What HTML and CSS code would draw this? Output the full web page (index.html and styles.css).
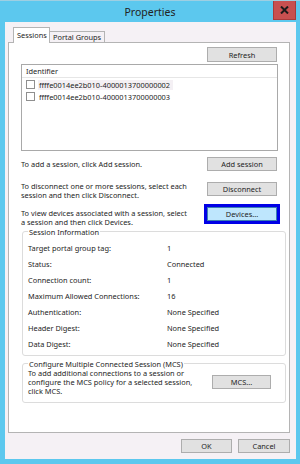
FILE: index.html
```html
<!DOCTYPE html>
<html lang="en">
  <head>
    <meta charset="UTF-8" />
    <title>Properties</title>
    <link rel="stylesheet" href="styles.css">
  </head>
  <body>
    <div class="window">
      <div class="titlebar">
        <span></span>
        <span class="title">Properties</span>
        <span class="close">
          <svg width="9" height="8" viewBox="0 0 9 8">
            <path d="M1 0.5 L8 7.5 M8 0.5 L1 7.5" stroke="#1a1a1a" stroke-width="2" />
          </svg>
        </span>
      </div>

      <div class="client">
        <div class="tabs">
          <div class="tab active">Sessions</div>
          <div class="tab">Portal Groups</div>
        </div>

        <div class="panel">
          <div class="refresh-row">
            <button>Refresh</button>
          </div>

          <div class="list">
            <div class="list-head">Identifier</div>
            <div class="list-item selected">
              <span class="check"></span>
              <span class="ident">ffffe0014ee2b010-4000013700000002</span>
            </div>
            <div class="list-item">
              <span class="check"></span>
              <span class="ident">ffffe0014ee2b010-4000013700000003</span>
            </div>
          </div>

          <div class="action add">
            <p>To add a session, click Add session.</p>
            <button>Add session</button>
          </div>

          <div class="action disconnect">
            <p>To disconnect one or more sessions, select each<br />session and then click Disconnect.</p>
            <button>Disconnect</button>
          </div>

          <div class="action devices">
            <p>To view devices associated with a session, select<br />a session and then click Devices.</p>
            <button class="focused">Devices...</button>
          </div>

          <fieldset class="group info">
            <legend>Session Information</legend>
            <dl>
              <dt>Target portal group tag:</dt><dd>1</dd>
              <dt>Status:</dt><dd>Connected</dd>
              <dt>Connection count:</dt><dd>1</dd>
              <dt>Maximum Allowed Connections:</dt><dd>16</dd>
              <dt>Authentication:</dt><dd>None Specified</dd>
              <dt>Header Digest:</dt><dd>None Specified</dd>
              <dt>Data Digest:</dt><dd>None Specified</dd>
            </dl>
          </fieldset>

          <fieldset class="group mcs">
            <legend>Configure Multiple Connected Session (MCS)</legend>
            <div class="mcs-body">
              <p>To add additional connections to a session or<br />configure the MCS policy for a selected session,<br />click MCS.</p>
              <button>MCS...</button>
            </div>
          </fieldset>
        </div>
        <!-- .panel -->

        <div class="footer">
          <button>OK</button>
          <button>Cancel</button>
        </div>
      </div>
      <!-- .client -->
    </div>
    <!-- .window -->
  </body>
</html>
```

FILE: styles.css
```css
*,
*::before,
*::after {
  box-sizing: border-box;
  padding: 0;
  margin: 0;
}

body {
  width: 300px;
  height: 464px;
  overflow: hidden;
  font-family: 'Noto Sans', 'DejaVu Sans', sans-serif;
  font-size: 7.4px;
  color: #1e1e1e;
}

.window {
  height: 464px;
  display: flex;
  flex-direction: column;
  background-color: #5cc8ee;
  border-top: 1px solid #9ecfe2;
}

.titlebar {
  height: 21px;
  display: grid;
  grid-template-columns: 1fr auto 1fr;
  align-items: start;
}

.titlebar .title {
  padding-top: 4px;
  font-size: 10.5px;
  color: #222;
}

.titlebar .close {
  justify-self: end;
  width: 23px;
  height: 19px;
  margin-right: 4px;
  display: flex;
  align-items: center;
  justify-content: center;
  background-color: #c75050;
  border: 1px solid #a83b3b;
  border-top: none;
}

.client {
  flex: 1;
  margin: 0 4px 5px 5px;
  padding: 5px 6px 0 3px;
  display: flex;
  flex-direction: column;
  background-color: #f5f1f5;
}

.tabs {
  display: flex;
  align-items: flex-end;
  padding-left: 5px;
  margin-bottom: -1px;
}

.tab {
  height: 12px;
  padding: 0 3px;
  line-height: 11px;
  white-space: nowrap;
  border: 1px solid #b4b4b4;
  border-bottom: none;
  background-color: #f5f1f5;
}

.tab.active {
  position: relative;
  z-index: 1;
  width: 37px;
  height: 16px;
  padding-top: 2px;
  background-color: #fff;
}

.tab + .tab {
  border-left: none;
}

.panel {
  height: 391px;
  padding: 0 3px 0 12px;
  display: flex;
  flex-direction: column;
  background-color: #fff;
  border: 1px solid #b4b4b4;
}

button {
  height: 14px;
  font-family: inherit;
  font-size: inherit;
  color: #1e1e1e;
  background-color: #e1e1e1;
  border: 1px solid #adadad;
}

.refresh-row {
  display: flex;
  justify-content: flex-end;
  margin: 4px 9px 0 0;
}

.refresh-row button {
  width: 70px;
  height: 15px;
}

.list {
  height: 87px;
  margin: 2px 8px 0 0;
  border: 1px solid #a9a9a9;
}

.list-head {
  height: 13px;
  padding-left: 4px;
  line-height: 12px;
  border-bottom: 1px solid #e6e6e6;
}

.list-item {
  height: 12px;
  padding: 1px 0 0 4px;
  display: flex;
  align-items: center;
  gap: 3px;
}

.check {
  width: 9px;
  height: 9px;
  border: 1px solid #8f8f8f;
  background-color: #fff;
}

.ident {
  padding: 0 3px 0 1px;
  line-height: 10px;
}

.list-item.selected .ident {
  background-color: #f4f0f4;
}

.action {
  display: grid;
  grid-template-columns: 1fr 70px;
  margin-right: 9px;
  line-height: 9.5px;
}

.action p {
  padding-top: 0.5px;
}

.action.add {
  margin-top: 6px;
  align-items: center;
}

.action.disconnect {
  margin-top: 10px;
}

.action.disconnect button {
  margin-top: 1px;
}

.action.devices {
  margin-top: 6px;
}

.action.devices p {
  padding-top: 2px;
}

button.focused {
  background-color: #bee6fd;
  border-color: #3c7fb1;
  outline: 3px solid #0000e6;
}

.group {
  margin-left: 1px;
  padding: 0 5px;
  border: 1px solid #dcdcdc;
  border-radius: 3px;
}

.group legend {
  padding: 0 1px;
  line-height: 10px;
}

.info {
  margin-top: -1px;
  height: 129px;
}

.info dl {
  display: grid;
  grid-template-columns: 139px 1fr;
  grid-auto-rows: 16.1px;
  align-items: center;
  padding-top: 3px;
}

.mcs {
  margin-top: 3px;
  height: 44px;
}

.mcs-body {
  display: grid;
  grid-template-columns: 1fr 59px;
  align-items: center;
  margin-right: 9px;
  line-height: 9px;
}

.footer {
  display: flex;
  justify-content: flex-end;
  gap: 6px;
  margin-top: 6px;
}

.footer button {
  width: 51px;
}

.footer button + button {
  width: 52px;
}
```
